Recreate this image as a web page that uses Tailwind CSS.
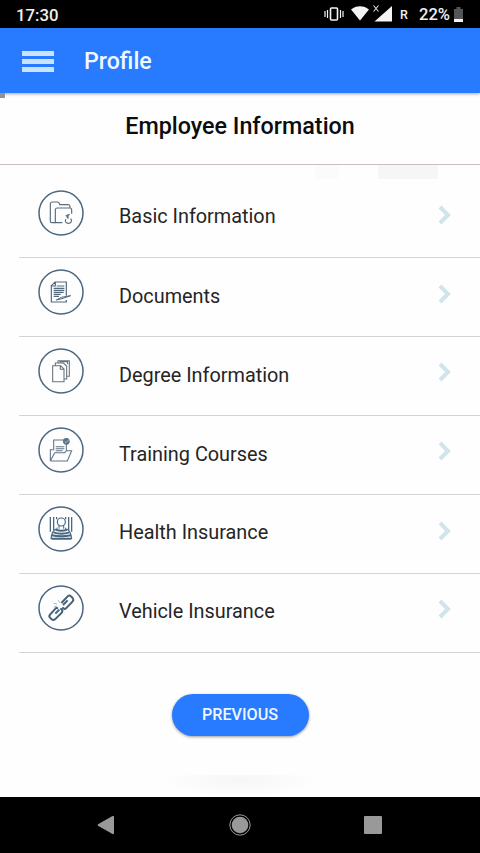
<!DOCTYPE html>
<html lang="en">
<head>
<meta charset="utf-8">
<title>Profile</title>
<script src="https://cdn.jsdelivr.net/npm/@tailwindcss/browser@4"></script>
</head>
<body class="w-[480px] h-[853px] overflow-hidden bg-[#fefefe] font-['Roboto',sans-serif] flex flex-col">
  <div class="h-7 shrink-0 bg-black text-[#f0f0f0] flex items-center justify-between pl-4 pr-[17px]">
    <span class="text-[16.800px] font-medium leading-7 pt-0.5">17:30</span>
    <div class="flex items-center h-7">
      <svg class="w-[77px] h-7" viewBox="0 0 77 28" fill="#f4f4f4">
        <rect x="6.500" y="8" width="7" height="12" rx="1" fill="none" stroke="#f4f4f4" stroke-width="1.600"/>
        <path d="M1 11v6M3.500 10v8M16.500 10v8M19 11v6" stroke="#f4f4f4" stroke-width="1.200"/>
        <path d="M27 9.500C32 5 40 5 45 9.500L36 20.500Z"/>
        <path d="M68 6v15.500H50.500Z"/>
        <path d="M49 5l6 7M55 5l-6 7" stroke="#000" stroke-width="3"/>
        <path d="M49.500 5.500l5 6M54.500 5.500l-5 6" stroke="#ddd" stroke-width="1.100"/>
      </svg>
      <span class="text-[12.500px] font-medium leading-7 w-[18px] pt-0.5 -ml-px mr-px">R</span>
      <span class="text-[16.500px] font-medium leading-7 pt-0.5 w-[35px]">22%</span>
      <svg class="w-[9px] h-[15px]" viewBox="0 0 9 15"><path d="M0 2h2.500V0h4v2H9v13H0Z" fill="#555"/><path d="M0 12h9v3H0Z" fill="#f4f4f4"/></svg>
    </div>
  </div>
  <header class="relative h-[65px] shrink-0 bg-[#287aff] flex items-center pl-[22px] shadow-[0_1px_3px_rgba(0,0,0,0.35)]">
    <div class="w-8 flex flex-col gap-[3px] pt-px">
      <span class="h-[5px] bg-[#c9e2ff]"></span><span class="h-[5px] bg-[#c9e2ff]"></span><span class="h-[5px] bg-[#c9e2ff]"></span>
    </div>
    <h1 class="ml-[30px] pt-0.5 text-[23.200px] font-medium text-[#f0f9ff]">Profile</h1>
    <span class="absolute left-0 top-[65px] w-[5px] h-[5px] bg-[#8e9299]"></span>
  </header>
  <h2 class="h-[72px] shrink-0 text-center text-[23.300px] leading-[67px] font-medium text-[#0c0c0c] border-b border-[#cbbdbf]">Employee Information</h2>
  <div class="h-[14px] shrink-0 flex justify-end pr-[42px] gap-10">
    <span class="w-6 bg-[#fbfbfb]"></span><span class="w-[60px] bg-[#f6f6f6]"></span>
  </div>
  <ul class="shrink-0 ml-[19px] text-[19.850px] text-[#252525]">
    <li class="h-[79px] flex border-b border-[#d3d4d6] pl-[19px] pr-[28px]">
      <svg class="w-[46px] h-[46px] mt-[11px]" viewBox="24 25 138 138" fill="none" stroke="#5b6d7e" stroke-width="3.500">
        <circle cx="93" cy="94" r="66" stroke="#4c677f" stroke-width="4.500"/>
        <path d="M76 123H65Q61 123 61 118V67Q61 61 67 61H82Q87 61 89 69H115Q120 69 120 75V79"/><path d="M97 123H76V85Q76 79 82 79H119Q125 79 125 85V96"/><path d="M108 112C103 119 108 125 115 125C124 125 127 117 122 111M107 103l7-3v11M119 98c-5 2-8 6-7 11"/>
      </svg>
      <span class="ml-[35px] leading-[75px] flex-1">Basic Information</span>
      <svg class="w-[14px] h-[20px] mt-[26px]" viewBox="0 0 14 20" fill="none" stroke="#d0e4eb" stroke-width="4"><path d="M2 2l8 8-8 8"/></svg>
    </li>
    <li class="h-[79px] flex border-b border-[#d3d4d6] pl-[19px] pr-[28px]">
      <svg class="w-[46px] h-[46px] mt-[11px]" viewBox="24 27 138 138" fill="none" stroke="#536879" stroke-width="3.500">
        <circle cx="93" cy="96" r="66" stroke="#4c677f" stroke-width="4.500"/>
        <path d="M109 107V66H75L64 77V126H109V120M64 78H76V66M80 78H103M71 85H103M71 91H103M71 97H101M71 103H92M71 109H87"/><path d="M79 120l15-8 28-5-26 9Z" stroke-width="3"/>
      </svg>
      <span class="ml-[35px] leading-[77px] flex-1">Documents</span>
      <svg class="w-[14px] h-[20px] mt-[26px]" viewBox="0 0 14 20" fill="none" stroke="#d0e4eb" stroke-width="4"><path d="M2 2l8 8-8 8"/></svg>
    </li>
    <li class="h-[79px] flex border-b border-[#d3d4d6] pl-[19px] pr-[28px]">
      <svg class="w-[46px] h-[46px] mt-[11px]" viewBox="24 27 138 138" fill="none" stroke="#65737f" stroke-width="3.200">
        <circle cx="93" cy="96" r="66" stroke="#4c677f" stroke-width="4.500"/>
        <path d="M68 80H92L102 90V128H68ZM91 80V91H102M76 79V72H100L110 81V120H103M84 71V65H118V112H111M88 68H113V76"/>
      </svg>
      <span class="ml-[35px] leading-[77px] flex-1">Degree Information</span>
      <svg class="w-[14px] h-[20px] mt-[25px]" viewBox="0 0 14 20" fill="none" stroke="#d0e4eb" stroke-width="4"><path d="M2 2l8 8-8 8"/></svg>
    </li>
    <li class="h-[79px] flex border-b border-[#d3d4d6] pl-[19px] pr-[28px]">
      <svg class="w-[46px] h-[46px] mt-[11px]" viewBox="24 27 138 138" fill="none" stroke="#617485" stroke-width="3.200">
        <circle cx="93" cy="96" r="66" stroke="#4c677f" stroke-width="4.500"/>
        <path d="M61 129V95H71V66H101M109 78V98M61 129H112L125 98H109L104 104H74L61 129M77 86H103M77 92H103M77 98H98"/><circle cx="109" cy="70" r="8.500" fill="#527084"/><path d="M104 70l4 4 8-9" stroke="#dce8ee" stroke-width="2"/>
      </svg>
      <span class="ml-[35px] leading-[77px] flex-1">Training Courses</span>
      <svg class="w-[14px] h-[20px] mt-[25px]" viewBox="0 0 14 20" fill="none" stroke="#d0e4eb" stroke-width="4"><path d="M2 2l8 8-8 8"/></svg>
    </li>
    <li class="h-[79px] flex border-b border-[#d3d4d6] pl-[19px] pr-[28px]">
      <svg class="w-[46px] h-[46px] mt-[11px]" viewBox="24 27 138 138" fill="none" stroke="#466681" stroke-width="4.500">
        <circle cx="93" cy="96" r="66" stroke="#4c677f"/>
        <path d="M61 60V104M71 60V99M80 60V67M107 60V67M116 60V99M125 60V104" stroke-width="3.800"/><circle cx="94" cy="75" r="12" stroke-width="3.500"/><path d="M87 85V95M101 85V95M81 92V96M107 92V96" stroke-width="3"/><path d="M77 98Q94 105 111 98M70 106Q94 114 118 106M65 115Q94 121 123 115M64 125H124" stroke-width="6"/><path d="M78 96Q65 101 63 126M110 96Q123 101 125 126" stroke-width="3.500"/>
      </svg>
      <span class="ml-[35px] leading-[75px] flex-1">Health Insurance</span>
      <svg class="w-[14px] h-[20px] mt-[26px]" viewBox="0 0 14 20" fill="none" stroke="#d0e4eb" stroke-width="4"><path d="M2 2l8 8-8 8"/></svg>
    </li>
    <li class="h-[79px] flex border-b border-[#d3d4d6] pl-[19px] pr-[28px]">
      <svg class="w-[46px] h-[46px] mt-[11px]" viewBox="24 27 138 138" fill="none" stroke="#466076" stroke-width="6">
        <circle cx="93" cy="96" r="66" stroke="#4c677f" stroke-width="4.500"/>
        <path d="M94 81L113 61Q118 56 123 61L128 66Q132 71 128 76L108 97Q104 101 99 96L97 94M99 87L113 73M84 98L79 95L60 116Q56 121 60 125L65 130Q70 134 75 130L96 109Q99 104 94 100L91 97M76 113L88 101"/><path d="M89 80l-4-7M81 84l-10-2M79 90l-8 3" stroke="#a8b7c2" stroke-width="3"/>
      </svg>
      <span class="ml-[35px] leading-[75px] flex-1">Vehicle Insurance</span>
      <svg class="w-[14px] h-[20px] mt-[25px]" viewBox="0 0 14 20" fill="none" stroke="#d0e4eb" stroke-width="4"><path d="M2 2l8 8-8 8"/></svg>
    </li>
  </ul>
  <main class="flex-1 flex flex-col items-center justify-between pt-[41px]">
    <button class="w-[137px] h-[42px] rounded-full bg-[#287aff] text-[#edf7ff] text-[16.200px] font-medium shadow-[0_1px_3px_rgba(0,0,0,0.4)]">PREVIOUS</button>
    <span class="w-[160px] h-[22px] bg-radial-[at_50%_20%] from-[#f6f6f6] to-[#fefefe] to-70%"></span>
  </main>
  <nav class="h-14 shrink-0 bg-black flex items-center justify-between pl-[97px] pr-[98px]">
    <svg class="w-[18px] h-5" viewBox="0 0 18 20" fill="#999"><path d="M1 9.200L15.500 1Q17 .5 17 2V18Q17 19.500 15.500 19L1 10.800Q0 10 1 9.200Z"/></svg>
    <svg class="w-[22px] h-[22px]" viewBox="0 0 22 22"><circle cx="11" cy="11" r="8.300" fill="#999"/><circle cx="11" cy="11" r="10.200" fill="none" stroke="#999"/></svg>
    <span class="w-[18px] h-[18px] rounded-[1px] bg-[#999]"></span>
  </nav>
</body>
</html>
